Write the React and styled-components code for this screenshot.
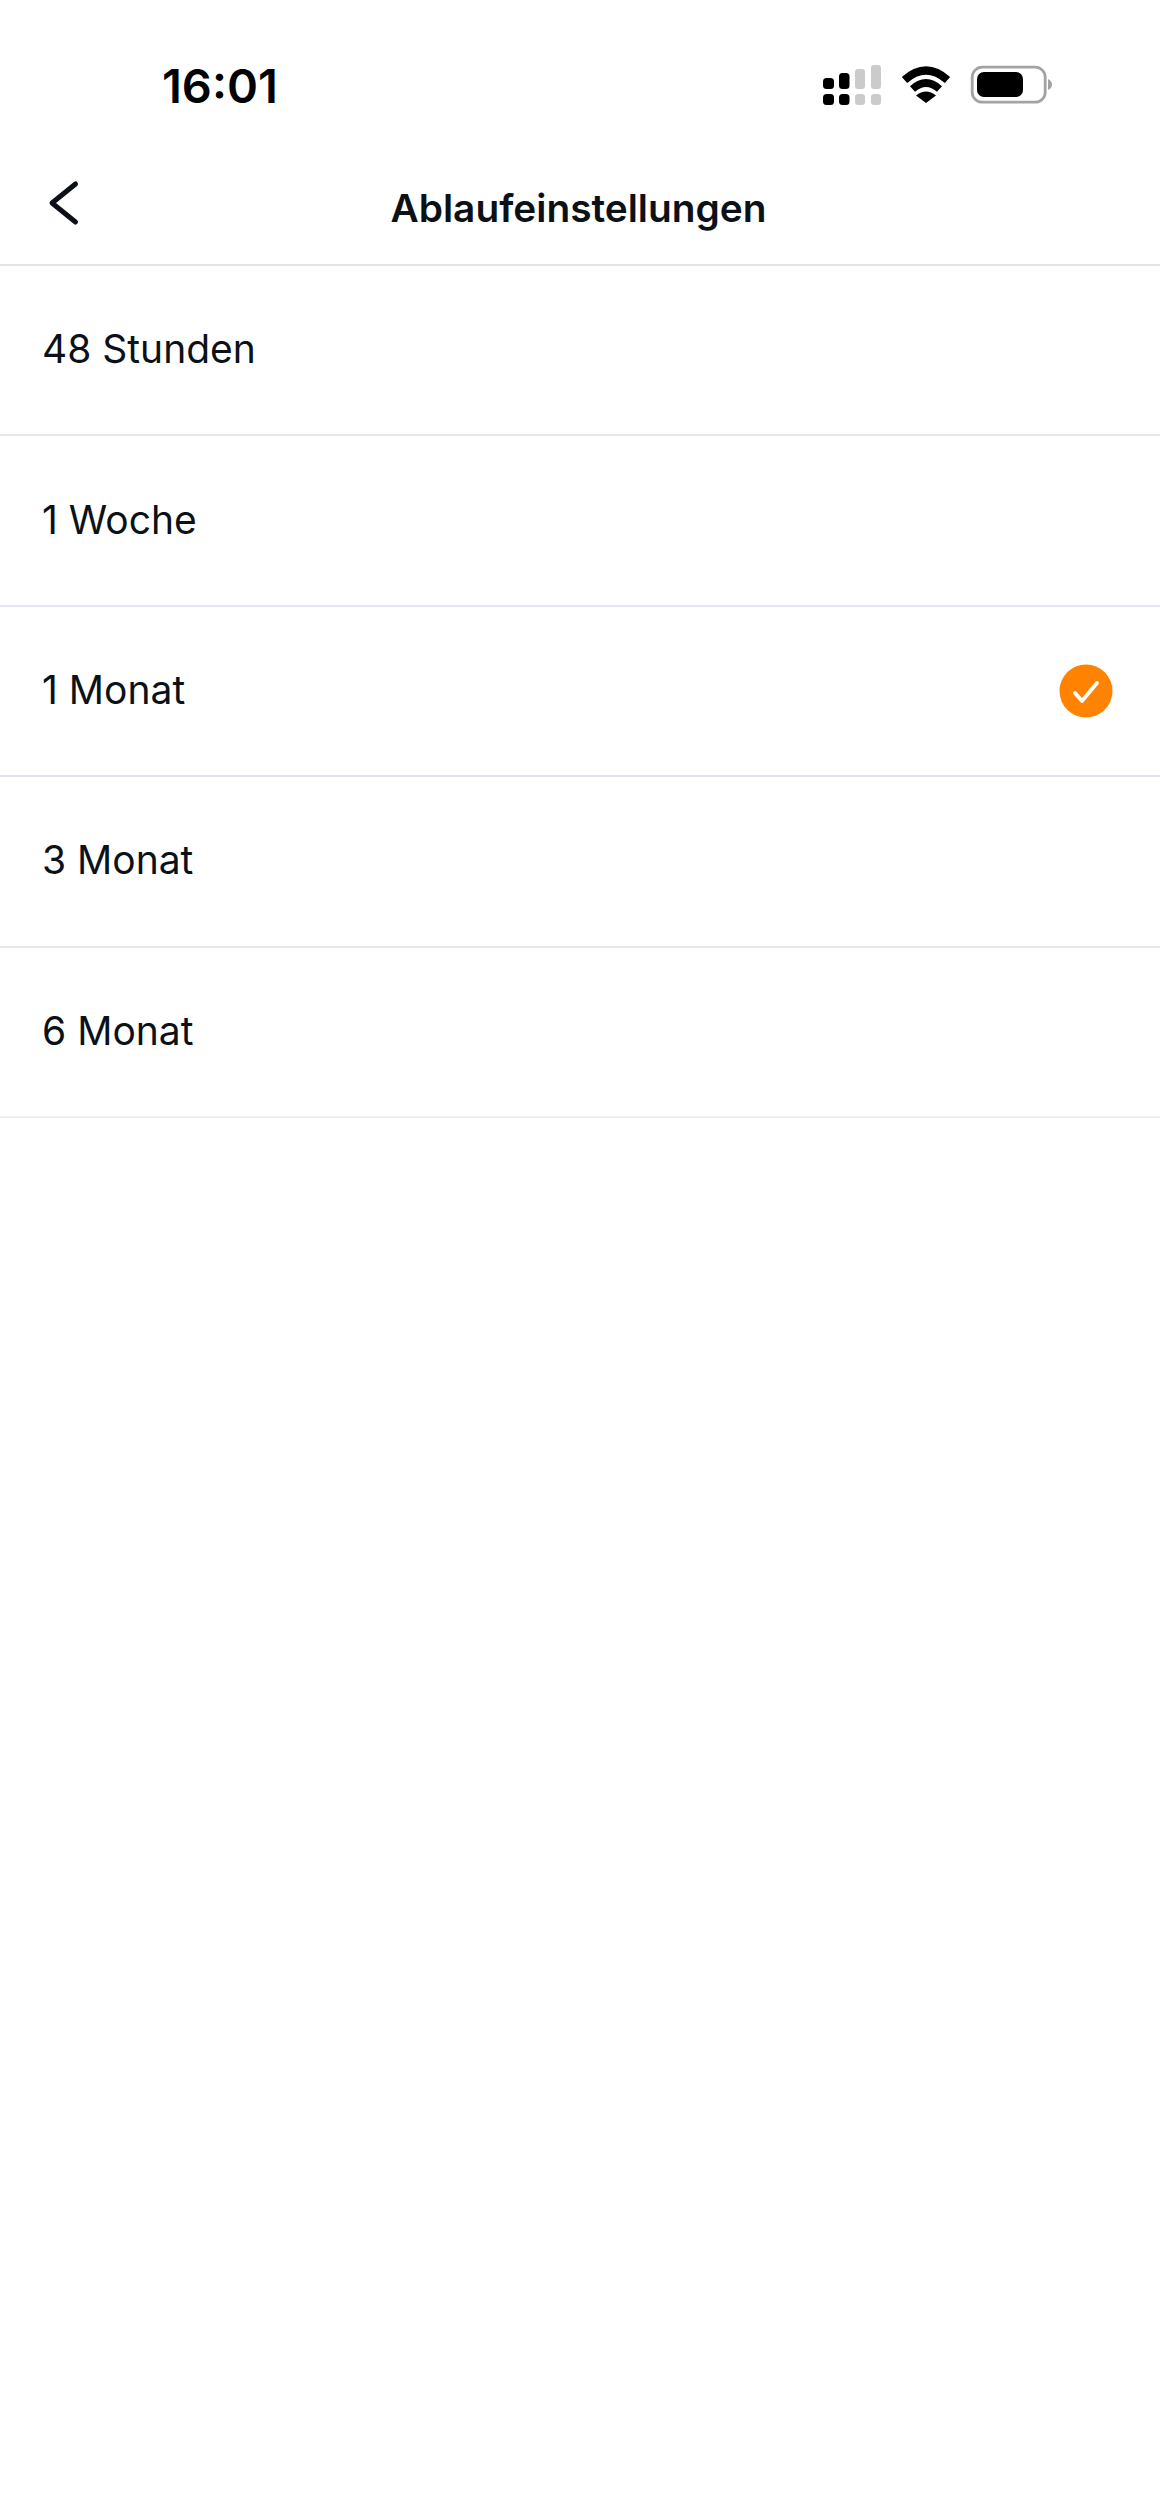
import React from "react";
import styled, { createGlobalStyle } from "styled-components";

const Global = createGlobalStyle`
  html, body { margin: 0; padding: 0; background: #fff; }
  #root { width: 1160px; height: 2520px; }
`;
const Page = styled.div`
  width: 1160px; height: 2520px; background: #fff; display: flex; flex-direction: column;
  font-family: "Inter", "Liberation Sans", sans-serif; color: #0b1117;
`;
const StatusBar = styled.div`
  height: 156px; flex: none; padding: 56px 105px 0 162px; box-sizing: border-box;
  display: flex; justify-content: space-between; align-items: flex-start;
`;
const Time = styled.div`
  font-weight: 600; font-size: 47px; line-height: 60px; color: #000;
`;
const StatusIcons = styled.svg`
  width: 235px; height: 50px; margin-top: 4px;
`;
const NavBar = styled.div`
  height: 108px; flex: none; display: flex; align-items: center; justify-content: center; position: relative;
  border-bottom: 2px solid #e4e4e6; padding-right: 3px;
`;
const BackIcon = styled.svg`
  position: absolute; left: 46px; top: 22px; width: 36px; height: 50px;
`;
const Title = styled.div`
  font-size: 38.8px; font-weight: 570; line-height: 48px; margin-top: -5px;
`;
const List = styled.div`display: flex; flex-direction: column;`;
const Row = styled.div`
  height: 170.4px; box-sizing: border-box; border-bottom: 2px solid ${(p) => p.$line};
  display: flex; align-items: center; justify-content: space-between;
  padding: 0 47px 0 42px; font-size: 39px; font-weight: 420; line-height: 48px;
`;
const Label = styled.span`margin-top: -2px;`;
const Check = styled.svg`width: 54px; height: 54px;`;

const rows = [
  { label: "48 Stunden", line: "#e3e6ee" },
  { label: "1 Woche", line: "#e4e6f0" },
  { label: "1 Monat", line: "#e1e4ec", selected: true },
  { label: "3 Monat", line: "#e4e7f0" },
  { label: "6 Monat", line: "#eeeff4" },
];

export default function App() {
  return (
    <Page>
      <Global />
      <StatusBar>
        <Time>16:01</Time>
        <StatusIcons viewBox="820 60 235 50">
          <g fill="#000">
            <rect x="823" y="78" width="11" height="11" rx="3.5" />
            <rect x="823" y="94" width="11" height="11" rx="3.5" />
            <rect x="839" y="73" width="10.5" height="16" rx="3.5" />
            <rect x="839" y="94" width="10.5" height="11" rx="3.5" />
          </g>
          <g fill="#cbcbcb">
            <rect x="855" y="69" width="10" height="20" rx="3" />
            <rect x="855" y="94" width="10" height="11" rx="3" />
            <rect x="871" y="65" width="10" height="24" rx="3" />
            <rect x="871" y="94" width="10" height="11" rx="3" />
          </g>
          <g fill="none" stroke="#000">
            <path d="M904.5 80 Q926 61 947.5 80" strokeWidth="8" />
            <path d="M912.5 89 Q926 77 939.5 89" strokeWidth="7.5" />
          </g>
          <path d="M926 103 L916 95.5 Q926 87.5 936 95.5 Z" fill="#000" />
          <rect x="972.2" y="67.2" width="73" height="35" rx="10" fill="none" stroke="#a3a3a3" strokeWidth="2.8" />
          <rect x="977" y="72" width="46" height="25" rx="7" fill="#000" />
          <path d="M1048 79 Q1052 81 1052 84.5 Q1052 88 1048 90 Z" fill="#a3a3a3" />
        </StatusIcons>
      </StatusBar>
      <NavBar>
        <BackIcon viewBox="46 178 36 50">
          <path d="M75.5 184 L52 203 L75.5 222" fill="none" stroke="#0b1117" strokeWidth="5" strokeLinecap="round" strokeLinejoin="round" />
        </BackIcon>
        <Title>Ablaufeinstellungen</Title>
      </NavBar>
      <List>
        {rows.map((r) => (
          <Row key={r.label} $line={r.line}>
            <Label>{r.label}</Label>
            {r.selected && (
              <Check viewBox="0 0 54 54">
                <circle cx="27" cy="27" r="26.5" fill="#ff8200" />
                <path d="M16 29 L23 37 L38 19" fill="none" stroke="#fff" strokeWidth="3.8" strokeLinecap="round" strokeLinejoin="round" />
              </Check>
            )}
          </Row>
        ))}
      </List>
    </Page>
  );
}
